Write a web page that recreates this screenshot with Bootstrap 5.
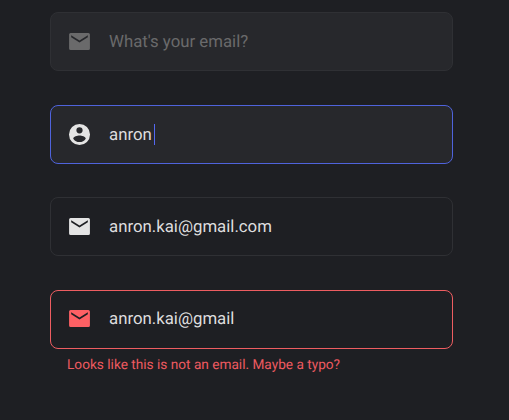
<!DOCTYPE html>
<html lang="en" data-bs-theme="dark">
<head>
<meta charset="utf-8">
<meta name="viewport" content="width=device-width, initial-scale=1">
<title>Email field states</title>
<link href="https://cdn.jsdelivr.net/npm/bootstrap@5.3.0/dist/css/bootstrap.min.css" rel="stylesheet">
<style>
body{background:#1e1f23;font-family:Roboto,sans-serif;height:420px;overflow:hidden}
.states{width:403px;margin-left:50px;padding-top:12px;gap:33.5px}
.field-box{height:59px;border:1px solid #2f3034;border-radius:8px;padding:0 16px;color:#dededf;font-size:16.8px;line-height:24px}
.field-box svg{width:25px;height:25px;margin-right:17px;flex:none;color:#e4e4e4}
.field-box .value{text-rendering:geometricPrecision}
.is-empty{background:#27282c;color:#6a6a6b}
.is-empty svg{color:#6a6a6b}
.is-typing{background:#27282c;border-color:#4f63dc}
.field-box.is-typing .value{padding-top:1px}
.is-wrong{border-color:#ee5d61}
.field-box.is-wrong svg{color:#fd6064;margin-bottom:1px}
.caret{width:1px;height:21px;background:#5468f0;margin-left:2px}
.hint{color:#ee5a60;font-size:13.65px;line-height:20px;margin:6px 0 0 17px;text-rendering:geometricPrecision}
</style>
</head>
<body>
<main class="states d-flex flex-column">
<div class="field-box is-empty d-flex align-items-center"><svg viewBox="0 0 24 24" fill="currentColor"><path d="M20.500 3.800h-17A1.500 1.500 0 0 0 2 5.300v13.400a1.500 1.500 0 0 0 1.500 1.500h17a1.500 1.500 0 0 0 1.500-1.500V5.300a1.500 1.500 0 0 0-1.500-1.500zM20 8l-8 5-8-5V6l8 5 8-5z"/></svg><span class="value">What's your email?</span></div>
<div class="field-box is-typing d-flex align-items-center"><svg viewBox="0 0 24 24" fill="currentColor"><path fill-rule="evenodd" d="M12 1.900a10.100 10.100 0 1 0 0 20.200 10.100 10.100 0 0 0 0-20.200zm0 3.100a3 3 0 1 1 0 6 3 3 0 0 1 0-6zm0 14.200a7.200 7.200 0 0 1-6-3.220c.03-1.990 4-3.080 6-3.080s5.970 1.090 6 3.080a7.200 7.200 0 0 1-6 3.220z"/></svg><span class="value">anron</span><span class="caret"></span></div>
<div class="field-box d-flex align-items-center"><svg viewBox="0 0 24 24" fill="currentColor"><path d="M20.500 3.800h-17A1.500 1.500 0 0 0 2 5.300v13.400a1.500 1.500 0 0 0 1.500 1.500h17a1.500 1.500 0 0 0 1.500-1.500V5.300a1.500 1.500 0 0 0-1.500-1.500zM20 8l-8 5-8-5V6l8 5 8-5z"/></svg><span class="value">anron.kai@gmail.com</span></div>
<div><div class="field-box is-wrong d-flex align-items-center"><svg viewBox="0 0 24 24" fill="currentColor"><path d="M20.500 3.800h-17A1.500 1.500 0 0 0 2 5.300v13.400a1.500 1.500 0 0 0 1.500 1.500h17a1.500 1.500 0 0 0 1.500-1.500V5.300a1.500 1.500 0 0 0-1.500-1.500zM20 8l-8 5-8-5V6l8 5 8-5z"/></svg><span class="value">anron.kai@gmail</span></div>
<p class="hint">Looks like this is not an email. Maybe a typo?</p></div>
</main>
<script src="https://cdn.jsdelivr.net/npm/bootstrap@5.3.0/dist/js/bootstrap.bundle.min.js"></script>
</body>
</html>
